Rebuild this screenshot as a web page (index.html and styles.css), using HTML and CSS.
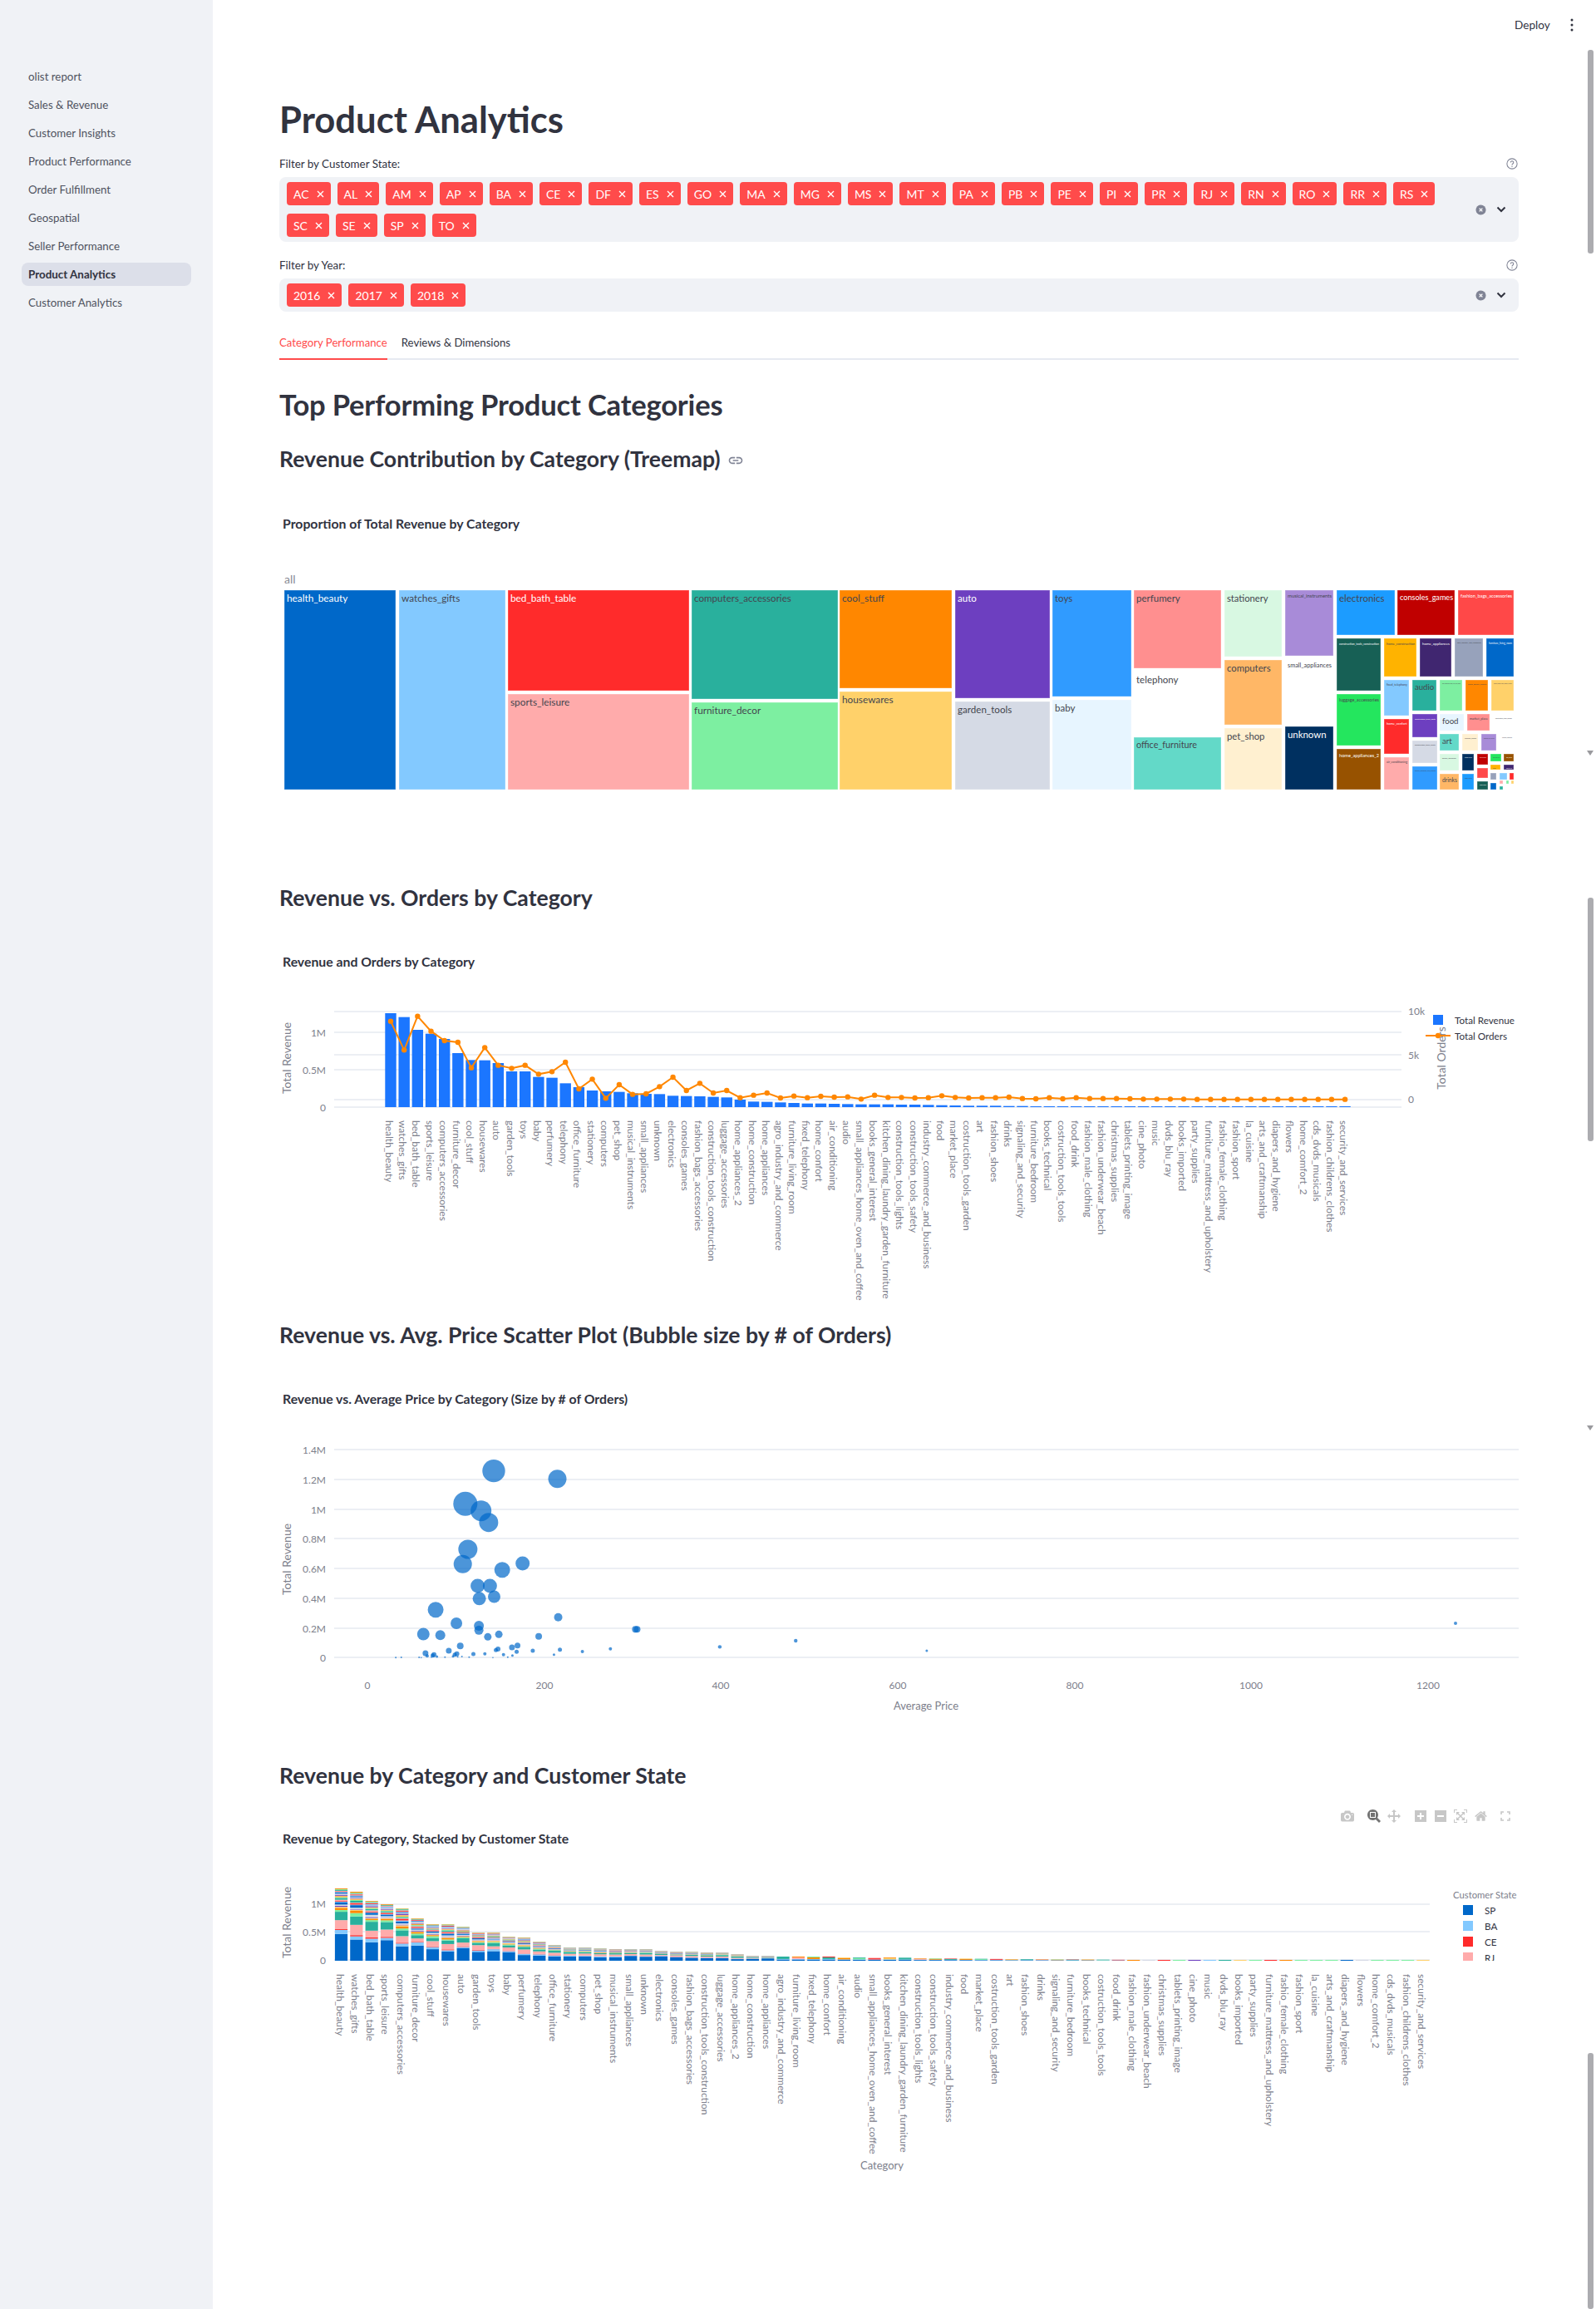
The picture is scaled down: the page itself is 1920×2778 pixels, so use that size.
FILE: index.html
```html
<!DOCTYPE html>
<html lang="en">
<head>
<meta charset="utf-8">
<title>Product Analytics</title>
<link rel="stylesheet" href="styles.css">
</head>
<body>
<div class="app">
  <aside class="sidebar">
    <nav class="nav">
      <a class="nav-item">olist report</a>
      <a class="nav-item">Sales &amp; Revenue</a>
      <a class="nav-item">Customer Insights</a>
      <a class="nav-item">Product Performance</a>
      <a class="nav-item">Order Fulfillment</a>
      <a class="nav-item">Geospatial</a>
      <a class="nav-item">Seller Performance</a>
      <a class="nav-item active">Product Analytics</a>
      <a class="nav-item">Customer Analytics</a>
    </nav>
  </aside>
  <main class="main">
    <h1 class="title">Product Analytics</h1>

    <div class="field field-first">
      <div class="field-label"><span>Filter by Customer State:</span>
        <svg class="help" viewBox="0 0 16 16"><circle cx="8" cy="8" r="7"/><path d="M6 6.2a2 2 0 1 1 3 1.8c-.7.4-1 .8-1 1.6"/><circle class="dot" cx="8" cy="11.7" r=".8"/></svg>
      </div>
      <div class="select">
        <div class="tags tags-wide" id="states"></div>
        <div class="select-icons">
          <svg class="clear" viewBox="0 0 14 14"><circle cx="7" cy="7" r="6.5"/><path d="M5 5l4 4M9 5l-4 4"/></svg>
          <svg class="chev" viewBox="0 0 12 12"><path d="M1.5 3.5L6 8l4.5-4.5"/></svg>
        </div>
      </div>
    </div>

    <div class="field">
      <div class="field-label"><span>Filter by Year:</span>
        <svg class="help" viewBox="0 0 16 16"><circle cx="8" cy="8" r="7"/><path d="M6 6.2a2 2 0 1 1 3 1.8c-.7.4-1 .8-1 1.6"/><circle class="dot" cx="8" cy="11.7" r=".8"/></svg>
      </div>
      <div class="select">
        <div class="tags" id="years"></div>
        <div class="select-icons">
          <svg class="clear" viewBox="0 0 14 14"><circle cx="7" cy="7" r="6.5"/><path d="M5 5l4 4M9 5l-4 4"/></svg>
          <svg class="chev" viewBox="0 0 12 12"><path d="M1.5 3.5L6 8l4.5-4.5"/></svg>
        </div>
      </div>
    </div>

    <div class="tabs">
      <div class="tab tab-active">Category Performance</div>
      <div class="tab">Reviews &amp; Dimensions</div>
    </div>

    <h2 class="section">Top Performing Product Categories</h2>

    <h3 class="sub">Revenue Contribution by Category (Treemap)
      <svg class="link" viewBox="0 0 24 24"><path d="M3.9 12c0-1.71 1.39-3.1 3.1-3.1h4V7H7c-2.76 0-5 2.24-5 5s2.24 5 5 5h4v-1.9H7c-1.71 0-3.1-1.39-3.1-3.1zM8 13h8v-2H8v2zm9-6h-4v1.9h4c1.71 0 3.1 1.39 3.1 3.1s-1.39 3.1-3.1 3.1h-4V17h4c2.76 0 5-2.24 5-5s-2.24-5-5-5z"/></svg>
    </h3>
    <div class="chart chart-a" id="treemap"></div>

    <h3 class="sub">Revenue vs. Orders by Category</h3>
    <div class="chart chart-b" id="combo"></div>

    <h3 class="sub">Revenue vs. Avg. Price Scatter Plot (Bubble size by # of Orders)</h3>
    <div class="chart chart-c" id="scatter"></div>

    <h3 class="sub">Revenue by Category and Customer State</h3>
    <div class="chart chart-d" id="stacked">
      <div class="modebar">
        <svg class="mb mb-cam" viewBox="0 0 1000 1000"><path transform="matrix(1 0 0 -1 0 850)" d="m500 450c-83 0-150-67-150-150 0-83 67-150 150-150 83 0 150 67 150 150 0 83-67 150-150 150z m400 150h-120c-16 0-34 13-39 29l-31 93c-6 15-23 28-40 28h-340c-16 0-34-13-39-28l-31-94c-6-15-23-28-40-28h-120c-55 0-100-45-100-100v-450c0-55 45-100 100-100h800c55 0 100 45 100 100v450c0 55-45 100-100 100z m-400-550c-138 0-250 112-250 250 0 138 112 250 250 250 138 0 250-112 250-250 0-138-112-250-250-250z m365 380c-19 0-35 16-35 35 0 19 16 35 35 35 19 0 35-16 35-35 0-19-16-35-35-35z"/></svg>
        <svg class="mb mb-on mb-zoom" viewBox="0 0 1125 1000"><path transform="matrix(1 0 0 -1 0 850)" d="m1000-25l-250 251c40 63 63 138 63 218 0 224-182 406-407 406-224 0-406-182-406-406s183-406 407-406c80 0 155 22 218 62l250-250 125 125z m-812 250l0 438 437 0 0-438-437 0z m62 375l313 0 0-312-313 0 0 312z"/></svg>
        <svg class="mb mb-pan" viewBox="0 0 1000 1000"><path transform="matrix(1 0 0 -1 0 850)" d="m1000 350l-187 188 0-125-250 0 0 250 125 0-188 187-187-187 125 0 0-250-250 0 0 125-188-188 186-187 0 125 252 0 0-250-125 0 187-188 188 188-125 0 0 250 250 0 0-126 187 188z"/></svg>
        <svg class="mb mb-plus" viewBox="0 0 875 1000"><path transform="matrix(1 0 0 -1 0 850)" d="m1 787l0-875 875 0 0 875-875 0z m687-500l-187 0 0-187-125 0 0 187-188 0 0 125 188 0 0 187 125 0 0-187 187 0 0-125z"/></svg>
        <svg class="mb mb-minus" viewBox="0 0 875 1000"><path transform="matrix(1 0 0 -1 0 850)" d="m0 788l0-876 875 0 0 876-875 0z m688-500l-500 0 0 125 500 0 0-125z"/></svg>
        <svg class="mb mb-auto" viewBox="0 0 1000 1000"><path transform="matrix(1 0 0 -1 0 850)" d="m250 850l-187 0-63 0 0-62 0-188 63 0 0 188 187 0 0 62z m688 0l-188 0 0-62 188 0 0-188 62 0 0 188 0 62-62 0z m-875-938l0 188-63 0 0-188 0-62 63 0 187 0 0 62-187 0z m875 188l0-188-188 0 0-62 188 0 62 0 0 62 0 188-62 0z m-125 188l-1 0-93-94-156 156 156 156 92-93 2 0 0 250-250 0 0-2 93-92-156-156-156 156 94 92 0 2-250 0 0-250 0 0 93 93 157-156-157-156-93 94 0 0 0-250 250 0 0 0-94 93 156 157 156-157-93-93 0 0 250 0 0 250z"/></svg>
        <svg class="mb mb-home" viewBox="0 0 928.6 1000"><path transform="matrix(1 0 0 -1 0 850)" d="m786 296v-267q0-15-11-26t-25-10h-214v214h-143v-214h-214q-15 0-25 10t-11 26v267q0 1 0 2t0 2l321 264 321-264q1-1 1-4z m124 39l-34-41q-5-5-12-6h-2q-7 0-12 3l-386 322-386-322q-7-4-13-4-7 2-12 7l-35 41q-4 5-3 13t6 12l401 334q18 15 42 15t43-15l136-114v109q0 8 5 13t13 5h107q8 0 13-5t5-13v-227l122-102q5-5 6-12t-4-13z"/></svg>
        <svg class="mb mb-full" viewBox="0 0 12 12"><path d="M1 4V1h3M8 1h3v3M11 8v3H8M4 11H1V8"/></svg>
      </div>
    </div>
  </main>
</div>

<header class="topbar">
  <span class="deploy">Deploy</span>
  <svg class="kebab" viewBox="0 0 4 16"><circle cx="2" cy="2" r="1.5"/><circle cx="2" cy="8" r="1.5"/><circle cx="2" cy="14" r="1.5"/></svg>
</header>

<div class="scroll scroll-1"></div>
<div class="scroll scroll-2"></div>
<div class="scroll scroll-3"></div>
<div class="scroll-arrow arrow-1"></div>
<div class="scroll-arrow arrow-2"></div>

<script src="script.js"></script>
</body>
</html>
```
FILE: styles.css
```css
* { box-sizing: border-box; }
html, body { margin: 0; padding: 0; }
body {
  width: 1920px;
  height: 2778px;
  overflow: hidden;
  position: relative;
  background: #fff;
  color: #31333f;
  font-family: "Lato", "Noto Sans", sans-serif;
  font-size: 14px;
}
.app { display: flex; height: 2778px; }

/* sidebar */
.sidebar { width: 256px; flex: none; background: #f0f2f6; padding: 78px 26px 0; }
.nav { display: flex; flex-direction: column; gap: 6px; }
.nav-item {
  height: 28px; line-height: 28px; padding-left: 8px; border-radius: 8px;
  font-size: 13.3px; color: #4f5260;
}
.nav-item.active { background: #dcdfe9; color: #31333f; font-weight: 700; font-size: 13.4px; }

/* main */
.main { flex: none; width: 1491px; margin-left: 80px; padding-top: 116px; }
.title { margin: 0 0 17px; font-size: 43.6px; line-height: 54px; font-weight: 700; }
.field { margin-bottom: 17px; }
.field-first { margin-bottom: 18px; }
.field-label { display: flex; justify-content: space-between; align-items: center; height: 20px; margin-bottom: 6px; font-size: 13.4px; }
.help { width: 14px; height: 14px; margin-right: 1px; fill: none; stroke: #808495; stroke-width: 1.2; }
.help .dot { fill: #808495; stroke: none; }

.select { background: #f0f2f6; border-radius: 8px; display: flex; justify-content: space-between; align-items: center; padding: 6px 0 6px 9px; }
.tags { display: flex; flex-wrap: wrap; gap: 10px 8px; }
.tags-wide { width: 1390px; }
.tag {
  height: 28px; background: #ff4b4b; color: #fff; border-radius: 4px; padding: 0 8px;
  display: flex; align-items: center; gap: 9px; font-size: 14px;
}
.tag svg { width: 9px; height: 9px; stroke: #fff; stroke-width: 1.4; fill: none; }
.select-icons { display: flex; align-items: center; gap: 12px; padding-right: 15px; }
.clear { width: 13px; height: 13px; }
.clear circle { fill: #808495; }
.clear path { stroke: #fff; stroke-width: 1.4; fill: none; }
.chev { width: 12px; height: 12px; fill: none; stroke: #31333f; stroke-width: 2; }

.tabs { display: flex; gap: 17px; height: 42px; margin-top: -1px; border-bottom: 2px solid #e6eaf1; }
.tab { height: 42px; line-height: 40px; padding-top: 1px; font-size: 13.2px; }
.tab-active { color: #ff4b4b; border-bottom: 2px solid #ff4b4b; }

.section { margin: 32px 0 25px; font-size: 34.6px; line-height: 44px; font-weight: 700; letter-spacing: -.2px; }
.sub { margin: 0 0 20px; font-size: 26.6px; line-height: 36px; font-weight: 700; display: flex; align-items: center; gap: 8px; }
.link { width: 20px; height: 20px; fill: #808495; margin-top: 4px; }

.chart { position: relative; width: 1491px; }
.chart-a { height: 450px; margin-bottom: 22px; }
.chart-b { height: 448px; margin-bottom: 22px; }
.chart-c { height: 452px; margin-bottom: 22px; }
.chart-d { height: 604px; }
.chart svg.plot { display: block; width: 1491px; height: 100%; overflow: visible; }

/* plot text */
.plot text { font-family: "Lato", "Noto Sans", sans-serif; }
.ct { font-size: 15.8px; font-weight: 700; fill: #31333f; }
.tick { font-size: 12px; fill: #7d808c; }
.atitle { font-size: 14px; fill: #7d808c; }
.atitle-x { font-size: 13px; fill: #7d808c; }
.leg { font-size: 11.7px; fill: #31333f; }
.leg-title { font-size: 11.3px; fill: #7d808c; }
.tm-d { fill: #44464f; }
.tm-w { fill: #fff; }
.tm-all { font-size: 14px; fill: #8a8c96; }

/* modebar */
.modebar { position: absolute; top: 3px; right: 10px; display: flex; align-items: center; }
.mb { height: 16px; width: 16px; fill: rgba(68,68,68,.3); flex: none; }
.mb-on { fill: rgba(68,68,68,.75); }
.mb-cam { margin-right: 16px; }
.mb-zoom { width: 18px; margin-right: 6px; }
.mb-pan { margin-right: 17px; }
.mb-plus { width: 14px; margin-right: 10px; }
.mb-minus { width: 14px; margin-right: 9px; }
.mb-auto { margin-right: 9px; }
.mb-home { width: 15px; margin-right: 16px; }
.mb-full { width: 12px; height: 12px; fill: none; stroke: rgba(68,68,68,.3); stroke-width: 1.6; }

/* top bar and scrollbars */
.topbar { position: absolute; top: 18px; left: 1822px; display: flex; align-items: center; gap: 24px; height: 24px; }
.deploy { font-size: 13.6px; }
.kebab { width: 4px; height: 16px; fill: #31333f; }
.scroll { position: absolute; left: 1910px; width: 7px; background: #acacb0; border-radius: 3px; }
.scroll-1 { top: 60px; height: 245px; }
.scroll-2 { top: 1080px; height: 293px; }
.scroll-3 { top: 2470px; height: 308px; }
.scroll-arrow { position: absolute; left: 1909px; width: 0; height: 0; border-left: 4.5px solid transparent; border-right: 4.5px solid transparent; border-top: 6px solid #9a9a9e; }
.arrow-1 { top: 903px; }
.arrow-2 { top: 1715px; }
```
FILE: script.js
```js
(function () {
  var NS = 'http://www.w3.org/2000/svg';
  var LEFT = 336, W = 1491;

  /* ---------- multiselect tags ---------- */
  function fillTags(id, list) {
    var box = document.getElementById(id);
    list.forEach(function (t) {
      var d = document.createElement('div');
      d.className = 'tag';
      d.innerHTML = '<span>' + t + '</span><svg viewBox="0 0 9 9"><path d="M1 1l7 7M8 1L1 8"/></svg>';
      box.appendChild(d);
    });
  }
  fillTags('states', 'AC AL AM AP BA CE DF ES GO MA MG MS MT PA PB PE PI PR RJ RN RO RR RS SC SE SP TO'.split(' '));
  fillTags('years', ['2016', '2017', '2018']);

  /* ---------- svg helpers (page coordinates through viewBox) ---------- */
  function plot(hostId, top, height) {
    var host = document.getElementById(hostId);
    var s = document.createElementNS(NS, 'svg');
    s.setAttribute('class', 'plot');
    s.setAttribute('viewBox', LEFT + ' ' + top + ' ' + W + ' ' + height);
    host.insertBefore(s, host.firstChild);
    return s;
  }
  function el(parent, name, attrs, text) {
    var e = document.createElementNS(NS, name);
    for (var k in attrs) e.setAttribute(k, attrs[k]);
    if (text !== undefined) e.textContent = text;
    parent.appendChild(e);
    return e;
  }
  function rect(p, x0, y0, x1, y1, fill, extra) {
    var a = { x: x0, y: y0, width: x1 - x0, height: y1 - y0, fill: fill };
    if (extra) for (var k in extra) a[k] = extra[k];
    return el(p, 'rect', a);
  }
  function grid(p, x0, x1, y) { rect(p, x0, y - 0.75, x1, y + 0.75, '#e6eaf1'); }
  function tick(p, x, y, t, anchor) {
    el(p, 'text', { x: x, y: y + 4, 'class': 'tick', 'text-anchor': anchor || 'end' }, t);
  }
  function yTitle(p, x, y, t) {
    el(p, 'text', { x: x, y: y, 'class': 'atitle', 'text-anchor': 'middle', transform: 'rotate(-90 ' + x + ' ' + y + ')' }, t);
  }
  function vLabel(p, x, y, t) {
    el(p, 'text', { x: x, y: y, 'class': 'tick', transform: 'rotate(90 ' + x + ' ' + y + ')' }, t);
  }
  function chartTitle(p, y, t) { el(p, 'text', { x: 340, y: y + 5, 'class': 'ct' }, t); }

  /* ---------- shared data ---------- */
  var CATS = ['health_beauty','watches_gifts','bed_bath_table','sports_leisure','computers_accessories','furniture_decor','cool_stuff','housewares','auto','garden_tools','toys','baby','perfumery','telephony','office_furniture','stationery','computers','pet_shop','musical_instruments','small_appliances','unknown','electronics','consoles_games','fashion_bags_accessories','construction_tools_construction','luggage_accessories','home_appliances_2','home_construction','home_appliances','agro_industry_and_commerce','furniture_living_room','fixed_telephony','home_confort','air_conditioning','audio','small_appliances_home_oven_and_coffee','books_general_interest','kitchen_dining_laundry_garden_furniture','construction_tools_lights','construction_tools_safety','industry_commerce_and_business','food','market_place','costruction_tools_garden','art','fashion_shoes','drinks','signaling_and_security','furniture_bedroom','books_technical','costruction_tools_tools','food_drink','fashion_male_clothing','fashion_underwear_beach','christmas_supplies','tablets_printing_image','cine_photo','music','dvds_blu_ray','books_imported','party_supplies','furniture_mattress_and_upholstery','fashio_female_clothing','fashion_sport','la_cuisine','arts_and_craftmanship','diapers_and_hygiene','flowers','home_comfort_2','cds_dvds_musicals','fashion_childrens_clothes','security_and_services'];

  /* ---------- treemap ---------- */
  (function () {
    var s = plot('treemap', 590, 450);
    chartTitle(s, 631, 'Proportion of Total Revenue by Category');
    el(s, 'text', { x: 342, y: 702, 'class': 'tm-all' }, 'all');
    var d = 'd', w = 'w';
    var T = [
      ['health_beauty',342,710,476,950,'#0068c9',11.8,w],
      ['watches_gifts',480,710,608,950,'#83c9ff',11.8,d],
      ['bed_bath_table',611,710,829,831,'#ff2b2b',11.8,w],
      ['sports_leisure',611,835,829,950,'#ffabab',11.8,d],
      ['computers_accessories',832,710,1008,841,'#29b09d',11.6,d],
      ['furniture_decor',832,845,1008,950,'#7defa1',11.8,d],
      ['cool_stuff',1010,710,1145,828,'#ff8700',11.8,d],
      ['housewares',1010,832,1145,950,'#ffd16a',11.8,d],
      ['auto',1149,710,1263,840,'#6d3fc0',11.6,w],
      ['garden_tools',1149,844,1263,950,'#d5dae5',11.6,d],
      ['toys',1266,710,1361,838,'#309bff',11.5,d],
      ['baby',1266,842,1361,950,'#e7f5ff',11.5,d],
      ['perfumery',1364,710,1469,804,'#ff8f8f',11.5,d],
      ['telephony',1364,808,1469,885,'#ffffff',11.5,d],
      ['office_furniture',1364,887,1469,950,'#63d9c8',10.8,d],
      ['stationery',1473,710,1542,790,'#d8f8e2',11.2,d],
      ['computers',1473,794,1542,872,'#ffb766',11.3,d],
      ['pet_shop',1473,876,1542,950,'#fff0d0',11.3,d],
      ['musical_instruments',1546,710,1604,789,'#a88bd8',6.2,d],
      ['small_appliances',1546,793,1604,870,'#ffffff',7.4,d],
      ['unknown',1546,874,1604,950,'#003060',11.4,w],
      ['electronics',1608,710,1678,764,'#1c9cff',11.5,d],
      ['consoles_games',1681,710,1750,764,'#c00000',9.4,w],
      ['fashion_bags_accessories',1754,710,1821,764,'#ff4848',6.2,w],
      ['construction_tools_construction',1608,768,1661,831,'#176055',4.2,w],
      ['luggage_accessories',1608,835,1661,897,'#24e65e',6,d],
      ['home_appliances_2',1608,901,1661,950,'#975200',6.6,w],
      ['home_construction',1665,768,1704,814,'#ffb300',4.6,d],
      ['home_appliances',1708,768,1746,814,'#402670',4.8,w],
      ['agro_industry_and_commerce',1750,768,1784,814,'#97a2bb',2.8,d],
      ['furniture_living_room',1788,768,1821,814,'#0068c9',3.4,w],
      ['fixed_telephony',1665,818,1695,861,'#83c9ff',4,d],
      ['audio',1699,818,1728,855,'#29b09d',9.6,d],
      ['small_appliances_home_oven_and_coffee',1732,818,1759,855,'#7defa1',1.6,d],
      ['books_general_interest',1763,818,1790,855,'#ff8700',2.6,d],
      ['kitchen_dining_laundry_garden_furniture',1794,818,1821,855,'#ffd16a',1.5,d],
      ['home_confort',1665,865,1695,907,'#ff2b2b',4,w],
      ['air_conditioning',1665,911,1695,950,'#ffabab',3.6,d],
      ['construction_tools_lights',1699,859,1729,887,'#6d3fc0',3,w],
      ['construction_tools_safety',1699,891,1729,918,'#d5dae5',2.8,d],
      ['industry_commerce_and_business',1699,922,1729,950,'#309bff',2.2,d],
      ['food',1732,859,1761,879,'#e7f5ff',9.6,d],
      ['market_place',1765,859,1792,879,'#ff8f8f',4,d],
      ['costruction_tools_garden',1796,859,1821,879,'#ffffff',2.2,d],
      ['art',1732,883,1755,903,'#63d9c8',9.6,d],
      ['fashion_shoes',1759,883,1778,903,'#fff0d0',2.6,d],
      ['signaling_and_security',1782,883,1800,903,'#a88bd8',2,d],
      ['furniture_bedroom',1804,883,1821,903,'#ffffff',1.6,d],
      ['books_technical',1732,907,1755,927,'#d8f8e2',2.4,d],
      ['drinks',1732,931,1755,950,'#ffb766',7.6,d],
      ['costruction_tools_tools',1759,907,1773,927,'#003060',1.7,w],
      ['food_drink',1759,931,1773,950,'#1c9cff',2,d],
      ['fashion_male_clothing',1777,907,1790,920,'#c00000',1.3,w],
      ['fashion_underwear_beach',1777,924,1790,936,'#ff4848',1.3,w],
      ['christmas_supplies',1777,940,1790,950,'#176055',1.4,w],
      ['tablets_printing_image',1793,907,1806,916,'#24e65e',1.2,d],
      ['cine_photo',1809,907,1821,916,'#975200',1.6,w],
      ['music',1793,920,1805,926,'#ffb300',1.4,d],
      ['dvds_blu_ray',1809,920,1821,926,'#402670',1.4,w],
      ['',1793,930,1800,938,'#97a2bb'],
      ['',1804,930,1813,938,'#83c9ff'],
      ['',1816,930,1821,938,'#ff2b2b'],
      ['',1793,942,1800,950,'#0068c9'],
      ['',1804,939,1808,943,'#ffabab'],
      ['',1812,939,1815,943,'#7defa1'],
      ['',1818,939,1821,943,'#ffd16a'],
      ['',1804,946,1808,950,'#29b09d']
    ];
    T.forEach(function (r) {
      rect(s, r[1], r[2], r[3], r[4], r[5], { stroke: '#fff', 'stroke-opacity': 0.35, 'stroke-width': 1 });
      if (r[6]) {
        var t = el(s, 'text', { x: r[1] + 3, y: r[2] + 4 + r[6] * 0.85, 'class': r[7] === 'w' ? 'tm-w' : 'tm-d', 'font-size': r[6] }, r[0]);
        var room = r[3] - r[1] - 5, len = t.getComputedTextLength();
        if (len > room) t.setAttribute('font-size', r[6] * room / len);
      }
    });
  })();

  /* ---------- revenue + orders combo ---------- */
  (function () {
    var s = plot('combo', 1118, 448);
    chartTitle(s, 1158, 'Revenue and Orders by Category');
    [1217, 1242, 1269, 1287, 1323, 1332].forEach(function (y) { grid(s, 402, 1686, y); });
    var tops = [267,281,327,341,360,411,436,437,447,477,477,497,500,520,534,546,549,551,556,558,559,565,566,567,569,571,579,586,587,589,591,593,593,594,595,596,596,596,597,597,598,599,600,601,601,601,602,602,603,603,603,603];
    var line = [296,400,278,332,366,372,464,391,455,466,455,487,478,444,540,505,574,525,560,558,532,498,546,520,555,546,572,563,555,573,566,572,567,570,569,577,563,571,571,573,572,565,571,573,572,572,570,575,576,572,576,572,575,575,575,576,577,577,577,577,578,578,578,578,578,578,578,578,578,578,578,578];
    var pts = [];
    CATS.forEach(function (c, i) {
      var cx = 470 + i * 16.17;
      var topY = i < tops.length ? 1130 + tops[i] / 3 : 1331;
      rect(s, cx - 6.7, topY, cx + 6.7, 1332, '#1b76ff');
      vLabel(s, cx - 6, 1348, c);
      pts.push([cx, 1130 + line[i] / 3]);
    });
    el(s, 'polyline', { points: pts.map(function (p) { return p.join(','); }).join(' '), fill: 'none', stroke: '#ff8700', 'stroke-width': 2 });
    pts.forEach(function (p) { el(s, 'circle', { cx: p[0], cy: p[1], r: 3.2, fill: '#ff8700' }); });
    tick(s, 392, 1243, '1M'); tick(s, 392, 1288, '0.5M'); tick(s, 392, 1333, '0');
    tick(s, 1694, 1217, '10k', 'start'); tick(s, 1694, 1270, '5k', 'start'); tick(s, 1694, 1323, '0', 'start');
    yTitle(s, 350, 1273, 'Total Revenue');
    yTitle(s, 1739, 1273, 'Total Orders');
    rect(s, 1724, 1221, 1736, 1233, '#1b76ff');
    el(s, 'text', { x: 1750, y: 1232, 'class': 'leg' }, 'Total Revenue');
    el(s, 'line', { x1: 1715, x2: 1745, y1: 1246, y2: 1246, stroke: '#ff8700', 'stroke-width': 2 });
    el(s, 'circle', { cx: 1730, cy: 1246, r: 3.2, fill: '#ff8700' });
    el(s, 'text', { x: 1750, y: 1251, 'class': 'leg' }, 'Total Orders');
  })();

  /* ---------- scatter ---------- */
  (function () {
    var s = plot('scatter', 1644, 452);
    chartTitle(s, 1684, 'Revenue vs. Average Price by Category (Size by # of Orders)');
    var ys = [[1744,'1.4M'],[1780,'1.2M'],[1816,'1M'],[1851,'0.8M'],[1887,'0.6M'],[1923,'0.4M'],[1959,'0.2M'],[1994,'0']];
    ys.forEach(function (g) { grid(s, 402, 1827, g[0]); tick(s, 392, g[0] + 1, g[1]); });
    [[442,'0'],[655,'200'],[867,'400'],[1080,'600'],[1293,'800'],[1505,'1000'],[1718,'1200']].forEach(function (t) {
      tick(s, t[0], 2028, t[1], 'middle');
    });
    el(s, 'text', { x: 1114, y: 2057, 'class': 'atitle-x', 'text-anchor': 'middle' }, 'Average Price');
    yTitle(s, 350, 1876, 'Total Revenue');
    var B = [[537,149,13.7],[687,178,11],[470,268,14.5],[507,293,12.5],[525,335,11.5],[476,432,11.5],[464,485,11],[557,506,9.5],[605,483,8.5],[499,564,8.5],[528,564,8.5],[503,610,8],[538,603,7.5],[400,650,9.5],[449,699,7],[502,708,6],[502,724,5.5],[371,738,7.5],[411,742,6],[523,748,4.5],[549,739,4.5],[643,746,4],[689,677,5],[871,721,4],[875,721,4],[458,781,4],[431,798,3.5],[376,807,3.5],[396,812,3],[393,815,2.5],[450,809,3],[445,812,2.5],[547,792,3],[542,796,2.5],[580,786,3.5],[593,779,3.5],[591,802,2.5],[629,798,2.5],[693,794,2.5],[746,801,2],[812,791,2],[1070,784,2.2],[1249,762,2.2],[1558,798,1.5],[489,810,2.5],[516,809,2],[560,812,2],[581,815,1.5],[679,812,1.5],[380,817,2],[403,819,1.5],[441,818,1.5],[462,819,1],[452,820,1],[422,821,1],[479,821,1],[535,823,0.8],[570,821,1],[306,823,1],[319,822,1],[361,822,1],[366,823,0.8],[390,822,0.8]];
    B.forEach(function (b) {
      el(s, 'circle', { cx: 320 + b[0] / 1.96, cy: 1720 + b[1] / 3, r: b[2], fill: '#0068c9', 'fill-opacity': 0.7 });
    });
    el(s, 'circle', { cx: 1751, cy: 1953, r: 2, fill: '#0068c9', 'fill-opacity': 0.7 });
  })();

  /* ---------- stacked bars ---------- */
  (function () {
    var s = plot('stacked', 2174, 604);
    chartTitle(s, 2213, 'Revenue by Category, Stacked by Customer State');
    [2291, 2324, 2358].forEach(function (y) { grid(s, 402, 1720, y); });
    tick(s, 392, 2291, '1M'); tick(s, 392, 2325, '0.5M'); tick(s, 392, 2359, '0');
    yTitle(s, 350, 2313, 'Total Revenue');
    var tops = [276,288,321,333,348,384,405,405,414,435,435,450,453,468,480,489,489,492,495,495,495,501,504,504,507,507,513,519,519,522,522,522,522,525,525,526,525,526,528,528,529,529,530,530,531,531,531,532,532,532,533,533];
    var pal = ['#0068c9','#83c9ff','#ff2b2b','#ffabab','#29b09d','#7defa1','#ff8700','#ffd16a','#6d3fc0','#d5dae5'];
    var base = [.36,.05,.015,.12,.12,.035,.025,.015,.012,.03,.03,.012,.02,.015,.02,.012,.012,.01,.015,.02,.012,.01,.012,.008,.01,.012,.01];
    var seed = 7;
    function rnd() { seed = (seed * 16807) % 2147483647; return (seed % 1000) / 1000; }
    var endCols = ['#7defa1','#ff2b2b','#ff8700','#7defa1','#7defa1','#7defa1','#0068c9','#d5dae5','#7defa1','#7defa1','#7defa1','#ffd16a'];
    CATS.forEach(function (c, i) {
      var cx = 410.5 + i * 18.33;
      vLabel(s, cx - 6, 2375, c);
      var x0 = cx - 7.6, x1 = cx + 7.6, bottom = 2359;
      var h = i < tops.length ? (537 - tops[i]) / 3 : 1;
      if (h <= 1) {
        var col = i >= 60 ? endCols[i - 60] : pal[(i * 3) % 10];
        rect(s, x0, bottom - 1, x1, bottom, col);
        return;
      }
      if (h < 6) {
        /* small bars: a thin blue foot under a few strong colours */
        var accents = [4, 6, 5, 2, 7, 4, 3, 6];
        var y0 = bottom;
        [[0, 0.3], [1, 0.12], [accents[i % 8], 0.38], [accents[(i + 3) % 8], 0.2]].forEach(function (p) {
          var sh0 = h * p[1];
          rect(s, x0, y0 - sh0, x1, y0, pal[p[0]]);
          y0 -= sh0;
        });
        return;
      }
      var w = base.map(function (b) { return b * (0.55 + 0.9 * rnd()); });
      var sum = w.reduce(function (a, b) { return a + b; }, 0);
      var y = bottom;
      w.forEach(function (f, k) {
        var sh = h * f / sum;
        rect(s, x0, y - sh, x1, y, pal[k % 10]);
        y -= sh;
      });
    });
    el(s, 'text', { x: 1061, y: 2610, 'class': 'atitle-x', 'text-anchor': 'middle' }, 'Category');
    el(s, 'text', { x: 1748, y: 2284, 'class': 'leg-title' }, 'Customer State');
    var defs = el(s, 'clipPath', { id: 'legclip' });
    rect(defs, 1740, 2286, 1827, 2359, '#000');
    var g = el(s, 'g', { 'clip-path': 'url(#legclip)' });
    [['SP', '#0068c9'], ['BA', '#83c9ff'], ['CE', '#ff2b2b'], ['RJ', '#ffabab']].forEach(function (l, i) {
      var y = 2292 + i * 19;
      rect(g, 1760, y, 1772, y + 12, l[1]);
      el(g, 'text', { x: 1786, y: y + 11, 'class': 'leg' }, l[0]);
    });
  })();
})();
```
